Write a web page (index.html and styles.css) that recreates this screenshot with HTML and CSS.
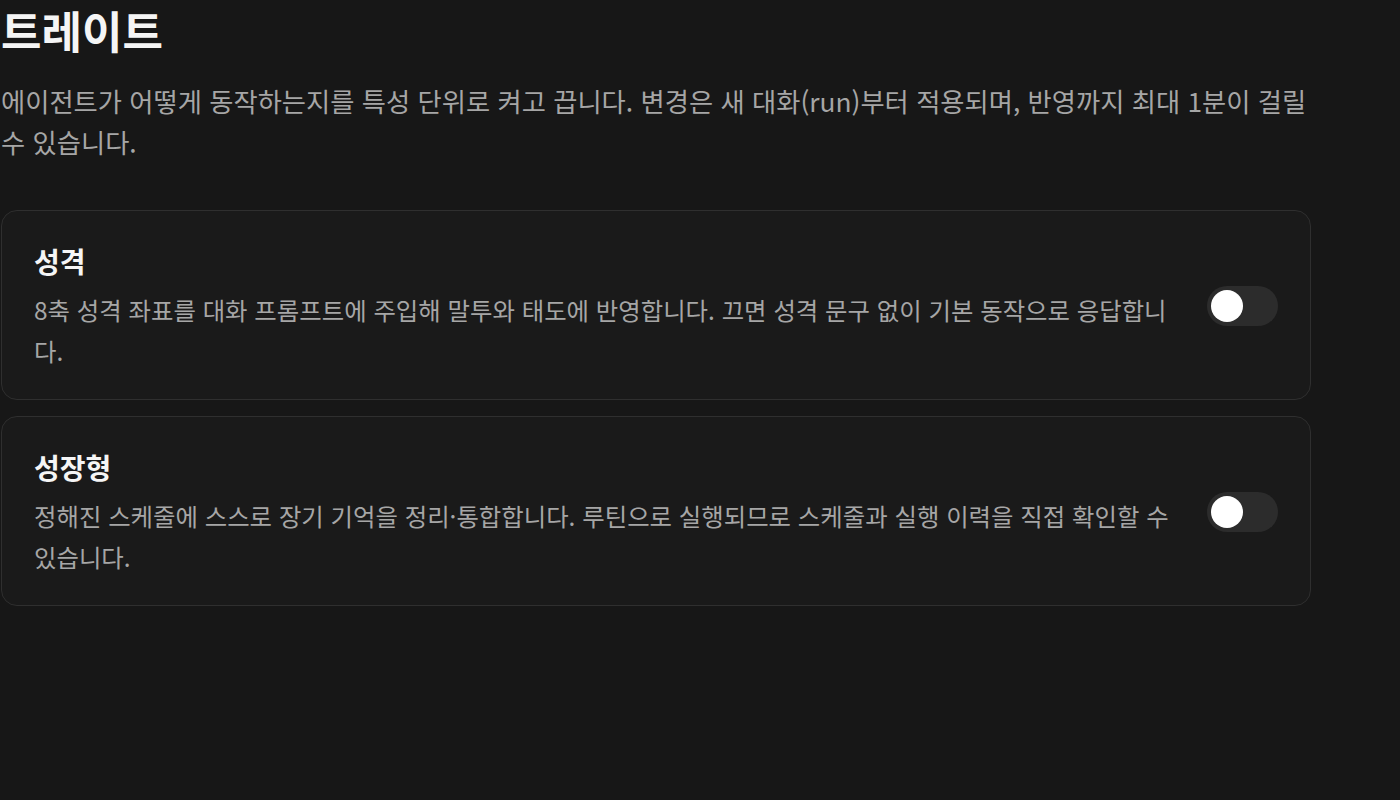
FILE: index.html
```html
<!DOCTYPE html>
<html lang="ko">
<head>
<meta charset="utf-8">
<link rel="stylesheet" href="styles.css">
</head>
<body>
<main class="page">
  <h1 class="title">트레이트</h1>
  <p class="lead">에이전트가 어떻게 동작하는지를 특성 단위로 켜고 끕니다. 변경은 새 대화(run)부터 적용되며, 반영까지 최대 1분이 걸릴 수 있습니다.</p>
  <section class="list">
    <div class="card">
      <div class="card-text">
        <h2 class="card-title">성격</h2>
        <p class="card-desc">8축 성격 좌표를 대화 프롬프트에 주입해 말투와 태도에 반영합니다. 끄면 성격 문구 없이 기본 동작으로 응답합니다.</p>
      </div>
      <button class="toggle" aria-label="성격"><span class="knob"></span></button>
    </div>
    <div class="card">
      <div class="card-text">
        <h2 class="card-title">성장형</h2>
        <p class="card-desc">정해진 스케줄에 스스로 장기 기억을 정리·통합합니다. 루틴으로 실행되므로 스케줄과 실행 이력을 직접 확인할 수 있습니다.</p>
      </div>
      <button class="toggle" aria-label="성장형"><span class="knob"></span></button>
    </div>
  </section>
</main>
</body>
</html>
```

FILE: styles.css
```css
html, body {
  margin: 0;
  padding: 0;
  background: #171717;
}
body {
  font-family: "Noto Sans CJK KR", "Noto Sans", sans-serif;
  color: #f2f2f2;
}
.page {
  width: 1310px;
  padding-left: 1px;
}
.title {
  margin: 0;
  font-size: 44px;
  font-weight: 700;
  line-height: 60px;
  color: #f5f5f5;
}
.lead {
  margin: 20px 0 0;
  font-size: 26.3px;
  line-height: 41px;
  color: #a6a6a6;
}
.list {
  margin-top: 48px;
  display: flex;
  flex-direction: column;
  gap: 16px;
}
.card {
  display: flex;
  align-items: center;
  gap: 32px;
  padding: 28px 32px 28px 32px;
  background: #1a1a1a;
  border: 1px solid #2f2f2f;
  border-radius: 16px;
}
.card-text {
  flex: 1;
  min-width: 0;
}
.card-title {
  margin: 0 0 6px;
  font-size: 28px;
  font-weight: 700;
  line-height: 44px;
  color: #f5f5f5;
}
.card-desc {
  margin: 0;
  font-size: 24.4px;
  line-height: 41px;
  color: #a6a6a6;
}
.toggle {
  flex: none;
  width: 71px;
  height: 40px;
  margin-top: 2px;
  padding: 4px;
  border: 0;
  border-radius: 20px;
  background: #2c2c2c;
  display: flex;
  align-items: center;
}
.knob {
  width: 32px;
  height: 32px;
  border-radius: 50%;
  background: #ffffff;
}
```
